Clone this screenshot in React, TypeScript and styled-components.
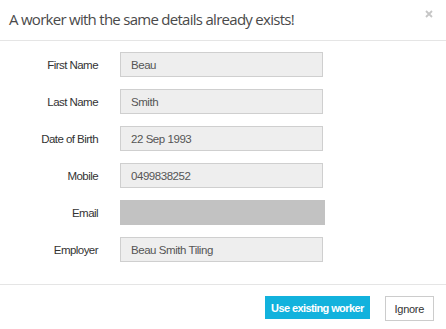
import React from 'react';
import styled, { createGlobalStyle } from 'styled-components';

const GlobalStyle = createGlobalStyle`
  body {
    margin: 0;
    background: #ffffff;
    font-family: 'Liberation Sans', Arial, sans-serif;
  }
`;

const Modal = styled.div`
  width: 446px;
  height: 329px;
  display: flex;
  flex-direction: column;
  background: #fff;
  box-sizing: border-box;
`;

const Header = styled.div`
  height: 40px;
  display: flex;
  align-items: center;
  justify-content: space-between;
  padding: 0 13px 0 9px;
  border-bottom: 1px solid #e5e5e5;
`;

const Title = styled.h4`
  margin: 0;
  font-family: 'Open Sans', sans-serif;
  font-weight: 400;
  font-size: 15px;
  letter-spacing: -0.72px;
  color: #4a4a4a;
  margin-top: -2px;
`;

const Close = styled.button`
  border: 0;
  background: none;
  padding: 0;
  width: 8px;
  height: 8px;
  display: flex;
  margin-top: -12px;
  cursor: pointer;
`;

const Body = styled.div`
  flex: 1;
  display: grid;
  grid-template-columns: 98px auto;
  column-gap: 22px;
  row-gap: 12px;
  align-content: start;
  justify-content: start;
  padding-top: 11px;
`;

const Label = styled.label`
  font-size: 11.5px;
  letter-spacing: -0.55px;
  color: #333;
  text-align: right;
  align-self: center;
`;

const Field = styled.div<{ $empty?: boolean }>`
  box-sizing: border-box;
  width: ${(p) => (p.$empty ? '205px' : '203px')};
  height: 25px;
  background: ${(p) => (p.$empty ? '#c2c2c2' : '#eeeeee')};
  border: ${(p) => (p.$empty ? '0' : '1px solid #cfcfcf')};
  padding: 0 10px;
  display: flex;
  align-items: center;
  font-size: 11.5px;
  letter-spacing: -0.45px;
  color: #555;
`;

const Footer = styled.div`
  border-top: 1px solid #e5e5e5;
  display: flex;
  justify-content: flex-end;
  align-items: flex-start;
  gap: 15px;
  padding: 11px 12px 8px 0;
  height: 45px;
  box-sizing: border-box;
`;

const Button = styled.button<{ $primary?: boolean }>`
  font-family: 'Liberation Sans', Arial, sans-serif;
  font-size: 11px;
  box-sizing: border-box;
  cursor: pointer;
  border-radius: 0;
  ${(p) =>
    p.$primary
      ? `
    height: 23px;
    padding: 0 5px;
    background: #12b2dd;
    border: 1px solid #12b2dd;
    color: #fff;
    font-weight: 700;
    letter-spacing: -0.6px;
  `
      : `
    height: 25px;
    padding: 0 9px;
    background: #fff;
    border: 1px solid #cccccc;
    color: #333;
    letter-spacing: -0.3px;
  `}
`;

const fields = [
  { label: 'First Name', value: 'Beau' },
  { label: 'Last Name', value: 'Smith' },
  { label: 'Date of Birth', value: '22 Sep 1993' },
  { label: 'Mobile', value: '0499838252' },
  { label: 'Email', value: '' },
  { label: 'Employer', value: 'Beau Smith Tiling' },
];

export default function App() {
  return (
    <>
      <GlobalStyle />
      <Modal>
        <Header>
          <Title>A worker with the same details already exists!</Title>
          <Close aria-label="Close">
            <svg width="8" height="8" viewBox="0 0 8 8">
              <path d="M1 1L7 7M7 1L1 7" stroke="#c6c6c6" strokeWidth="1.8" />
            </svg>
          </Close>
        </Header>
        <Body>
          {fields.map((f) => (
            <React.Fragment key={f.label}>
              <Label>{f.label}</Label>
              <Field $empty={!f.value}>{f.value}</Field>
            </React.Fragment>
          ))}
        </Body>
        <Footer>
          <Button $primary>Use existing worker</Button>
          <Button>Ignore</Button>
        </Footer>
      </Modal>
    </>
  );
}
